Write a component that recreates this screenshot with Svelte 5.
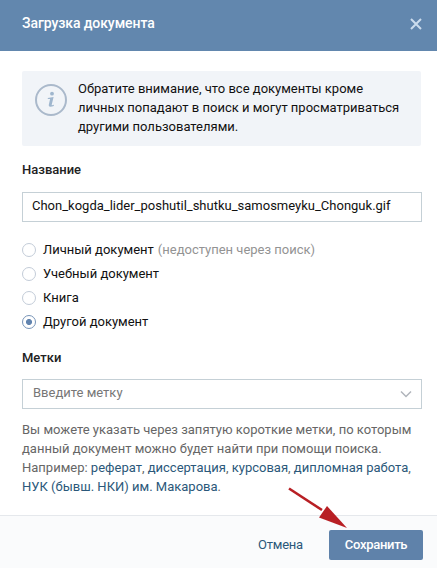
<script>
    let fileName = 'Chon_kogda_lider_poshutil_shutku_samosmeyku_Chonguk.gif';
    let tag = '';
    let docType = 'other';

    const docTypes = [
        {value: 'personal', label: 'Личный документ', note: '(недоступен через поиск)'},
        {value: 'study', label: 'Учебный документ'},
        {value: 'book', label: 'Книга'},
        {value: 'other', label: 'Другой документ'}
    ];
</script>

<style>
    :global(body) {
        background: #fff;
    }

    .modal {
        position: relative;
        display: flex;
        flex-direction: column;
        width: 437px;
        height: 568px;
        overflow: hidden;
        font-family: Roboto, "Open Sans", sans-serif;
        font-size: 13px;
        line-height: 19px;
        color: #111;
        background: #fff;
    }

    .header {
        display: flex;
        align-items: center;
        justify-content: space-between;
        box-sizing: border-box;
        height: 51px;
        padding: 0 14px 4px 22px;
        background: #6287ae;
    }

    h2 {
        margin: 0;
        font-size: 14px;
        font-weight: 500;
        letter-spacing: -0.08px;
        color: #fff;
    }

    button {
        padding: 0;
        border: 0;
        background: none;
        font: inherit;
        cursor: pointer;
    }

    svg {
        display: block;
    }

    .body {
        flex: 1;
        padding: 20px 15px 0 22px;
    }

    .info {
        display: flex;
        box-sizing: border-box;
        width: 399px;
        height: 75px;
        padding: 8px 0 0 13px;
        border-radius: 2px;
        background: #f1f4f8;
    }

    .info svg {
        margin: 5px 11px 0 0;
    }

    .info span,
    .help > span {
        display: block;
        white-space: nowrap;
    }

    .title {
        display: block;
        margin-top: 14px;
        font-weight: 500;
        color: #222;
    }

    .field {
        display: flex;
        align-items: center;
        box-sizing: border-box;
        width: 400px;
        height: 30px;
        margin-top: 13px;
        padding: 0 9px;
        border: 1px solid #c5d0d6;
    }

    .field input {
        flex: 1;
        min-width: 0;
        height: 24px;
        margin: 0 0 3px;
        padding: 0;
        border: 0;
        outline: 0;
        background: none;
        font: inherit;
        color: #111;
    }

    .field input::placeholder {
        color: #777;
        opacity: 1;
    }

    .types {
        display: flex;
        flex-direction: column;
        margin-top: 16px;
    }

    .types label {
        display: flex;
        align-items: center;
        height: 24px;
    }

    .types span,
    .types em {
        margin-bottom: 2px;
    }

    .types input {
        appearance: none;
        box-sizing: border-box;
        width: 14px;
        height: 14px;
        margin: 0 7px 0 0;
        border: 1px solid #c3ccd8;
        border-radius: 50%;
    }

    .types input:checked {
        border-color: #7794b8;
        background: radial-gradient(circle, #6284af 2.7px, transparent 3.3px);
    }

    .types em {
        margin-left: 4px;
        font-style: normal;
        color: #939393;
    }

    .tags + .field {
        margin-top: 12px;
        padding-left: 10px;
    }

    .help {
        margin-top: 11px;
        color: #666;
    }

    a {
        color: #2b587a;
        text-decoration: none;
    }

    .footer {
        display: flex;
        align-items: center;
        justify-content: flex-end;
        box-sizing: border-box;
        height: 53px;
        padding: 5px 14px 0 0;
        border-top: 1px solid #e5e8ec;
        background: #fafbfc;
    }

    .cancel {
        margin-right: 26px;
        letter-spacing: -0.2px;
        color: #2b587a;
    }

    .save {
        width: 94px;
        height: 30px;
        border-radius: 2px;
        background: #5f82aa;
        color: #fff;
        font-weight: 500;
        letter-spacing: -0.3px;
    }

    .arrow {
        position: absolute;
        left: 280px;
        top: 480px;
    }
</style>

<div class="modal">
    <div class="header">
        <h2>Загрузка документа</h2>
        <button aria-label="Закрыть">
            <svg width="14" height="14" viewBox="0 0 14 14" fill="none" stroke="#cbdced" stroke-width="2">
                <path d="M2 2L12 12M12 2L2 12" />
            </svg>
        </button>
    </div>
    <div class="body">
        <div class="info">
            <svg width="32" height="32" viewBox="0 0 32 32" fill="none">
                <circle cx="16" cy="16" r="15" stroke="#aab9cb" stroke-width="2" />
                <circle cx="17" cy="9.7" r="1.9" fill="#9fb6ce" />
                <path d="M12.8 14L18.6 13L16.7 20.7Q16.6 21.7 18.8 20.8V22Q14 24 13.7 21.2L15.1 15L12.8 14.9Z" fill="#9fb6ce" />
            </svg>
            <div>
                <span>Обратите внимание, что все документы кроме</span>
                <span>личных попадают в поиск и могут просматриваться</span>
                <span>другими пользователями.</span>
            </div>
        </div>

        <label class="title" for="name">Название</label>
        <div class="field">
            <input id="name" type="text" bind:value={fileName} />
        </div>

        <div class="types">
            {#each docTypes as type}
                <label>
                    <input type="radio" value={type.value} bind:group={docType} />
                    <span>{type.label}</span>
                    {#if type.note}<em>{type.note}</em>{/if}
                </label>
            {/each}
        </div>

        <label class="title tags" for="tags">Метки</label>
        <div class="field">
            <input id="tags" type="text" placeholder="Введите метку" bind:value={tag} />
            <svg width="12" height="8" viewBox="0 0 12 8" fill="none" stroke="#b0b5bb" stroke-width="1.5">
                <path d="M1 1.5L6 6.5L11 1.5" />
            </svg>
        </div>

        <div class="help">
            <span>Вы можете указать через запятую короткие метки, по которым</span>
            <span>данный документ можно будет найти при помощи поиска.</span>
            <span>Например: <a href="#ref">реферат</a>, <a href="#diss">диссертация</a>, <a href="#course">курсовая</a>, <a href="#diploma">дипломная работа</a>,</span>
            <span><a href="#nuk">НУК (бывш. НКИ) им. Макарова</a>.</span>
        </div>
    </div>
    <div class="footer">
        <button class="cancel">Отмена</button>
        <button class="save">Сохранить</button>
    </div>

    <svg class="arrow" width="75" height="55" viewBox="0 0 75 55">
        <path d="M9 8.5L42 30" stroke="#b81f24" stroke-width="2.6" />
        <path d="M47 26L67 48L39 37.5Z" fill="#b81f24" />
    </svg>
</div>
